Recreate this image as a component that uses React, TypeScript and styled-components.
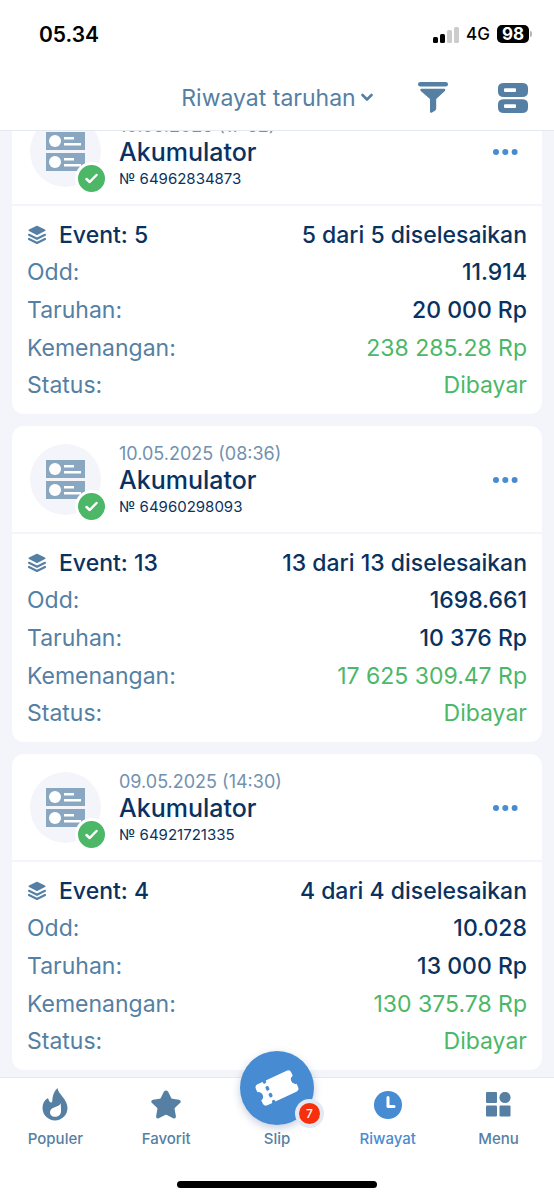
import React, { useLayoutEffect, useRef } from "react";
import styled, { createGlobalStyle } from "styled-components";

const color = {
  navy: "#0a3260",
  steel: "#5580a3",
  muted: "#7291ae",
  blue: "#478cd2",
  green: "#4bb767",
  page: "#f4f5fa",
  line: "#e4e8f1",
  icon: "#8aa7c1",
};

const GlobalStyle = createGlobalStyle`
  * { box-sizing: border-box; }
  body { margin: 0; background: ${color.page}; font-family: Inter, "Noto Sans", sans-serif; color: ${color.navy}; }
  button { border: 0; padding: 0; background: none; font: inherit; color: inherit; cursor: pointer; }
  h1, h2, p, dl, dt, dd { margin: 0; font-weight: inherit; }
  svg { display: block; }
`;

const Screen = styled.div`
  display: grid;
  grid-template-rows: auto minmax(0, 1fr) auto;
  height: 100vh;
`;

const Header = styled.header`
  background: #fff;
  border-bottom: 1px solid ${color.line};
`;

const StatusBar = styled.div`
  display: flex;
  align-items: center;
  justify-content: space-between;
  height: 68px;
  padding: 0 22px 0 39px;
  color: #000;
`;

const Clock = styled.time`
  font-size: 21px;
  font-weight: 600;
`;

const Indicators = styled.div`
  display: flex;
  align-items: center;
  gap: 7px;
  font-size: 17px;
  font-weight: 500;
`;

const Battery = styled.span`
  display: flex;
  align-items: center;
  gap: 1px;
  &::after {
    content: "";
    width: 2px;
    height: 6px;
    border-radius: 0 2px 2px 0;
    background: #b5b5b5;
  }
`;

const BatteryLevel = styled.span`
  padding: 0 5px;
  border-radius: 5px;
  background: #000;
  color: #fff;
  font-size: 17px;
  font-weight: 700;
  line-height: 18px;
`;

const TitleBar = styled.div`
  display: grid;
  grid-template-columns: 1fr auto 1fr;
  align-items: center;
  height: 62px;
  padding: 0 26px 3px;
  color: ${color.steel};
`;

const TitleButton = styled.button`
  grid-column: 2;
  display: flex;
  align-items: center;
  gap: 5px;
  font-size: 23px;
  line-height: 32px;
`;

const Tools = styled.div`
  display: flex;
  align-items: center;
  justify-content: flex-end;
  gap: 50px;
`;

const List = styled.main`
  display: flex;
  flex-direction: column;
  gap: 12px;
  padding: 12px;
  overflow-y: auto;
  scrollbar-width: none;
`;

const Card = styled.article`
  flex: none;
  border-radius: 12px;
  background: #fff;
`;

const CardHead = styled.div`
  display: flex;
  align-items: center;
  gap: 18px;
  height: 108px;
  padding: 0 24px 0 18px;
  border-bottom: 2px solid ${color.page};
`;

const Avatar = styled.div`
  position: relative;
  display: grid;
  place-items: center;
  width: 71px;
  height: 71px;
  border-radius: 50%;
  background: ${color.page};
`;

const WonBadge = styled.span`
  position: absolute;
  right: -7px;
  bottom: -8px;
  display: grid;
  place-items: center;
  width: 33px;
  height: 33px;
  border: 3px solid #fff;
  border-radius: 50%;
  background: ${color.green};
`;

const Summary = styled.div`
  flex: 1;
  padding-top: 4px;
`;

const DateText = styled.p`
  font-size: 18px;
  line-height: 22px;
  color: ${color.muted};
`;

const BetType = styled.h2`
  font-size: 25px;
  font-weight: 500;
  line-height: 30px;
`;

const BetNumber = styled.p`
  font-size: 15px;
  line-height: 24px;
`;

const MoreButton = styled.button`
  display: grid;
  place-items: center;
  height: 32px;
`;

const Details = styled.dl`
  display: grid;
  grid-auto-rows: 1fr;
  min-height: 208px;
  padding: 10px 15px;
`;

const Detail = styled.div`
  display: flex;
  align-items: center;
  justify-content: space-between;
  font-size: 23px;
  line-height: 32px;
`;

const Label = styled.dt<{ $strong?: boolean }>`
  display: flex;
  align-items: center;
  gap: 12px;
  color: ${(p) => (p.$strong ? color.navy : color.steel)};
  font-weight: ${(p) => (p.$strong ? 500 : 400)};
`;

const Value = styled.dd<{ $won?: boolean }>`
  color: ${(p) => (p.$won ? color.green : color.navy)};
  font-weight: ${(p) => (p.$won ? 400 : 500)};
`;

const Footer = styled.footer`
  position: relative;
  background: #fff;
  border-top: 1px solid ${color.line};
`;

const Tabs = styled.nav`
  display: grid;
  grid-template-columns: repeat(5, 1fr);
  height: 76px;
`;

const Tab = styled.button<{ $active?: boolean }>`
  display: flex;
  flex-direction: column;
  align-items: center;
  justify-content: flex-end;
  gap: 8px;
  padding-bottom: 5px;
  color: ${(p) => (p.$active ? color.blue : color.steel)};
  font-size: 15px;
  font-weight: 500;
  line-height: 20px;
`;

const TabIcon = styled.span`
  display: grid;
  place-items: center;
  height: 33px;
`;

const SlipCircle = styled.span`
  position: relative;
  display: grid;
  place-items: center;
  flex: none;
  width: 74px;
  height: 74px;
  margin: -28px 0 -4px;
  border-radius: 50%;
  background: ${color.blue};
  box-shadow: 0 3px 8px rgba(50, 80, 130, 0.28);
`;

const Count = styled.span`
  position: absolute;
  right: -6px;
  bottom: 1px;
  width: 21px;
  height: 21px;
  border-radius: 50%;
  background: #f62f0c;
  box-shadow: 0 0 0 4px #e3e8f2;
  color: #fff;
  font-size: 12px;
  line-height: 21px;
  text-align: center;
`;

const HomeArea = styled.div`
  display: flex;
  align-items: center;
  justify-content: center;
  height: 46px;
  padding-top: 15px;
`;

const HomeIndicator = styled.span`
  width: 36%;
  height: 7px;
  border-radius: 4px;
  background: #000;
`;

const SignalIcon = () => (
  <svg width="26" height="17" viewBox="0 0 26 17" aria-hidden="true">
    <rect x="0" y="11" width="5" height="6" rx="1.5" fill="#000" />
    <rect x="7" y="8" width="5" height="9" rx="1.5" fill="#000" />
    <rect x="14" y="4" width="5" height="13" rx="1.5" fill="#ccc" />
    <rect x="21" y="1" width="5" height="16" rx="1.5" fill="#ccc" />
  </svg>
);

const ChevronIcon = () => (
  <svg width="12" height="9" viewBox="0 0 12 9" aria-hidden="true">
    <path d="M1.5 2 6 6.5 10.500 2" fill="none" stroke="currentColor" strokeWidth="2.6" strokeLinecap="round" strokeLinejoin="round" />
  </svg>
);

const FilterIcon = () => (
  <svg width="30" height="31" viewBox="0 0 30 31" fill="currentColor" aria-hidden="true">
    <rect x="0" y="0" width="30" height="4.600" rx="2.300" />
    <path d="M3 6.800H26Q28.300 7.200 26.600 9.200L18.200 17V26.500Q18.200 28 17 28.800L14 30.600Q12 31.400 12 29.500V17L3 9.200Q1.500 7.600 3 6.800Z" />
  </svg>
);

const LayoutIcon = () => (
  <svg width="30" height="30" viewBox="0 0 30 30" aria-hidden="true">
    <path
      fill="currentColor"
      fillRule="evenodd"
      d="M6 0H24Q30 0 30 5V9Q30 14 24 14H6Q0 14 0 9V5Q0 0 6 0ZM7 5.300Q6 5.300 6 6.300V8Q6 9 7 9H17Q18 9 18 8V6.300Q18 5.300 17 5.300ZM6 16.300H24Q30 16.300 30 21.300V25Q30 30 24 30H6Q0 30 0 25V21.300Q0 16.300 6 16.300ZM7 21.300Q6 21.300 6 22.300V24Q6 25 7 25H17Q18 25 18 24V22.300Q18 21.300 17 21.300Z"
    />
  </svg>
);

const CouponIcon = () => (
  <svg width="39" height="39" viewBox="0 0 39 39" aria-hidden="true">
    {[0, 21].map((y) => (
      <g key={y} transform={`translate(0 ${y})`}>
        <rect width="39" height="18" fill={color.icon} />
        <circle cx="9" cy="9" r="6" fill="#fff" />
        <path d="M18 5H28V7.500H18ZM18 11H35V13.500H18Z" fill="#fff" />
      </g>
    ))}
  </svg>
);

const CheckIcon = () => (
  <svg width="13" height="11" viewBox="0 0 13 11" aria-hidden="true">
    <path d="M1.500 6 4.700 9 11.500 2" fill="none" stroke="#fff" strokeWidth="2.500" strokeLinecap="round" strokeLinejoin="round" />
  </svg>
);

const MoreIcon = () => (
  <svg width="26" height="8" viewBox="0 0 26 8" fill={color.blue} aria-hidden="true">
    <circle cx="4" cy="5" r="3" />
    <circle cx="13.300" cy="5" r="3" />
    <circle cx="22.600" cy="5" r="3" />
  </svg>
);

const StackIcon = () => (
  <svg width="20" height="20" viewBox="0 0 20 20" fill={color.steel} aria-hidden="true">
    <path d="M9.200.9Q10 .500 10.800.9L18 4.500Q19.200 5.300 18 6.100L10.800 9.700Q10 10.100 9.200 9.700L2 6.100Q.8 5.300 2 4.500Z" />
    <path d="M2 9.800 10 13.800 18 9.800M2 14 10 18 18 14" fill="none" stroke={color.steel} strokeWidth="2.200" strokeLinecap="round" strokeLinejoin="round" />
  </svg>
);

const FlameIcon = () => (
  <svg width="26" height="33" viewBox="0 0 26 33" aria-hidden="true">
    <path
      fill="currentColor"
      fillRule="evenodd"
      d="M15.500 0C16 6 25.500 11 25.500 20A12.500 12.500 0 0 1 .5 20C.5 15.500 2.500 12 6 10Q7.500 15 9.500 14.500C11.500 14 8.500 7 15.500 0ZM18.700 15.200C17 19.500 8 18.500 8 24.200C8 30.500 18.700 30.500 19 23.500C19.200 20 18.700 17.500 18.700 15.200Z"
    />
  </svg>
);

const StarIcon = () => (
  <svg width="30" height="29" viewBox="0 0 30 29" fill="currentColor" aria-hidden="true">
    <path d="M12.800 1.800Q15-1 17.200 1.800L20.200 8Q20.600 8.700 21.400 8.800L28 9.800Q31 10.700 29 13L24 17.700Q23.400 18.300 23.600 19.100L24.900 26.200Q25 29.200 22.200 28.300L15.900 25Q15 24.600 14.100 25L7.800 28.300Q5 29.200 5.100 26.200L6.400 19.100Q6.600 18.300 6 17.700L1 13Q-1 10.700 2 9.800L8.600 8.800Q9.400 8.700 9.800 8Z" />
  </svg>
);

const TicketIcon = () => (
  <svg width="46" height="40" viewBox="0 0 46 40" aria-hidden="true">
    <g transform="rotate(-25 23 20)">
      <path fill="#fff" d="M7 8.500H39Q42.500 8.500 42.500 12V15.500A4.600 4.600 0 0 0 42.500 24.500V28Q42.500 31.500 39 31.500H7Q3.500 31.500 3.500 28V24.500A4.600 4.600 0 0 0 3.500 15.500V12Q3.500 8.500 7 8.500Z" />
      <g fill={color.blue}>
        <rect x="12.500" y="6.500" width="3.400" height="4.300" rx="1.500" />
        <rect x="12.500" y="14" width="3.400" height="4.500" rx="1.500" />
        <rect x="12.500" y="21.500" width="3.400" height="4.500" rx="1.500" />
        <rect x="12.500" y="29.200" width="3.400" height="4.300" rx="1.500" />
      </g>
    </g>
  </svg>
);

const HistoryIcon = () => (
  <svg width="28" height="28" viewBox="0 0 28 28" aria-hidden="true">
    <circle cx="14" cy="14" r="14" fill="currentColor" />
    <path d="M14 6.500V15.500H20" fill="none" stroke="#fff" strokeWidth="3" strokeLinecap="round" strokeLinejoin="round" />
  </svg>
);

const MenuIcon = () => (
  <svg width="25" height="25" viewBox="0 0 25 25" fill="currentColor" aria-hidden="true">
    <rect width="11" height="11" rx="1" />
    <circle cx="19" cy="5.500" r="5.600" />
    <rect y="13.500" width="11" height="11" rx="1" />
    <rect x="13.500" y="13.500" width="11" height="11" rx="1" />
  </svg>
);

type Bet = { date: string; id: string; events: number; odd: string; stake: string; win: string };

const bets: Bet[] = [
  { date: "10.05.2025 (17:52)", id: "64962834873", events: 5, odd: "11.914", stake: "20 000 Rp", win: "238 285.28 Rp" },
  { date: "10.05.2025 (08:36)", id: "64960298093", events: 13, odd: "1698.661", stake: "10 376 Rp", win: "17 625 309.47 Rp" },
  { date: "09.05.2025 (14:30)", id: "64921721335", events: 4, odd: "10.028", stake: "13 000 Rp", win: "130 375.78 Rp" },
];

const BetCard = ({ bet }: { bet: Bet }) => (
  <Card>
    <CardHead>
      <Avatar>
        <CouponIcon />
        <WonBadge><CheckIcon /></WonBadge>
      </Avatar>
      <Summary>
        <DateText>{bet.date}</DateText>
        <BetType>Akumulator</BetType>
        <BetNumber>№ {bet.id}</BetNumber>
      </Summary>
      <MoreButton aria-label="Opsi"><MoreIcon /></MoreButton>
    </CardHead>
    <Details>
      <Detail>
        <Label $strong><StackIcon />Event: {bet.events}</Label>
        <Value>{bet.events} dari {bet.events} diselesaikan</Value>
      </Detail>
      <Detail><Label>Odd:</Label><Value>{bet.odd}</Value></Detail>
      <Detail><Label>Taruhan:</Label><Value>{bet.stake}</Value></Detail>
      <Detail><Label>Kemenangan:</Label><Value $won>{bet.win}</Value></Detail>
      <Detail><Label>Status:</Label><Value $won>Dibayar</Value></Detail>
    </Details>
  </Card>
);

export default function App() {
  const list = useRef<HTMLElement>(null);

  // The history opens slightly scrolled, with the first card partly under the header.
  useLayoutEffect(() => {
    if (list.current) list.current.scrollTop = 45;
  }, []);

  return (
    <>
      <GlobalStyle />
      <Screen>
        <Header>
          <StatusBar>
            <Clock>05.34</Clock>
            <Indicators>
              <SignalIcon />
              <span>4G</span>
              <Battery><BatteryLevel>98</BatteryLevel></Battery>
            </Indicators>
          </StatusBar>
          <TitleBar>
            <TitleButton>Riwayat taruhan<ChevronIcon /></TitleButton>
            <Tools>
              <button aria-label="Filter"><FilterIcon /></button>
              <button aria-label="Tampilan"><LayoutIcon /></button>
            </Tools>
          </TitleBar>
        </Header>
        <List ref={list}>
          {bets.map((bet) => <BetCard key={bet.id} bet={bet} />)}
        </List>
        <Footer>
          <Tabs>
            <Tab><TabIcon><FlameIcon /></TabIcon>Populer</Tab>
            <Tab><TabIcon><StarIcon /></TabIcon>Favorit</Tab>
            <Tab>
              <SlipCircle><TicketIcon /><Count>7</Count></SlipCircle>
              Slip
            </Tab>
            <Tab $active><TabIcon><HistoryIcon /></TabIcon>Riwayat</Tab>
            <Tab><TabIcon><MenuIcon /></TabIcon>Menu</Tab>
          </Tabs>
          <HomeArea><HomeIndicator /></HomeArea>
        </Footer>
      </Screen>
    </>
  );
}
